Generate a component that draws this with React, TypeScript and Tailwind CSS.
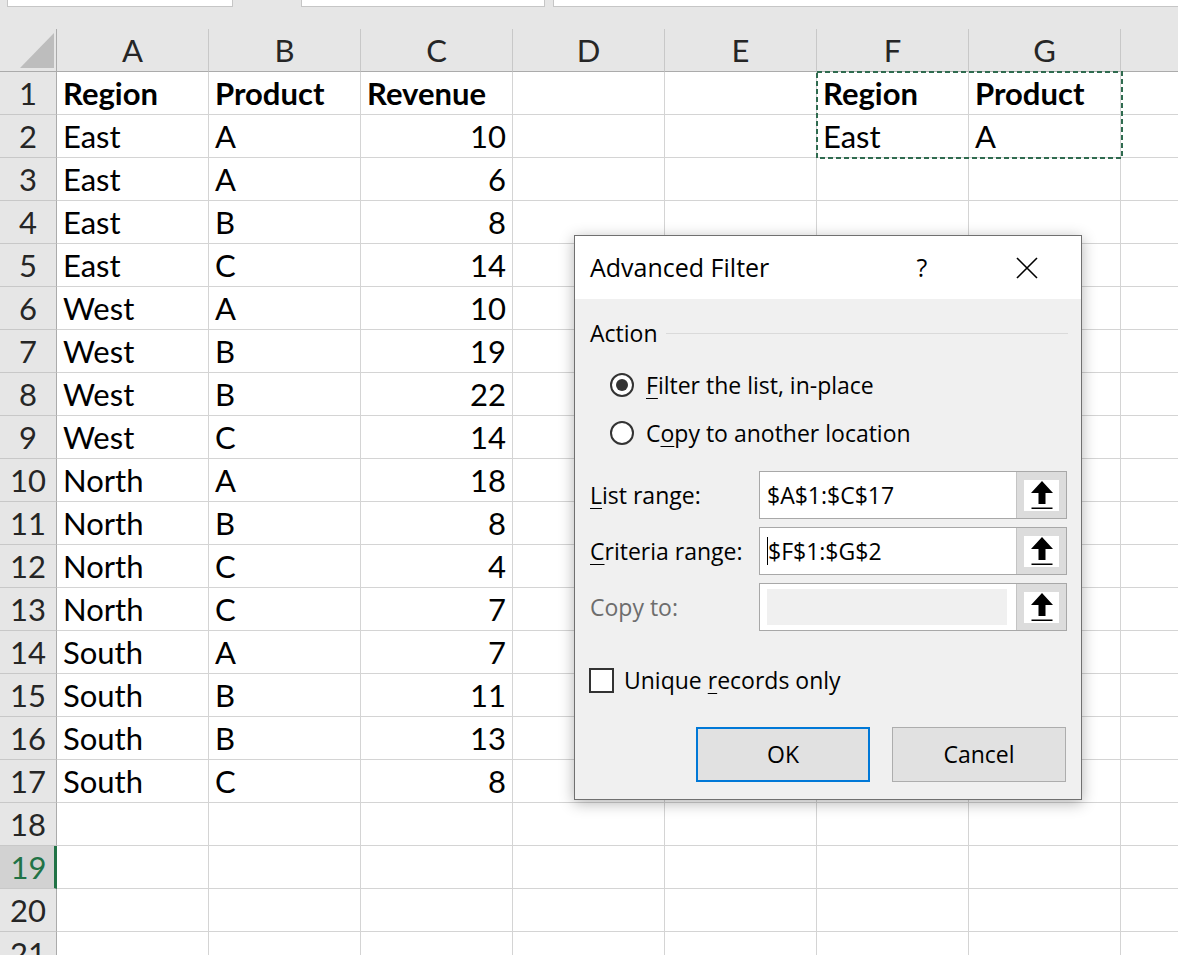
import React from 'react';

const COLS = ['A', 'B', 'C', 'D', 'E', 'F', 'G', 'H'];

type Row = Partial<Record<string, string>>;

const DATA: Row[] = [
  { A: 'Region', B: 'Product', C: 'Revenue', F: 'Region', G: 'Product' },
  { A: 'East', B: 'A', C: '10', F: 'East', G: 'A' },
  { A: 'East', B: 'A', C: '6' },
  { A: 'East', B: 'B', C: '8' },
  { A: 'East', B: 'C', C: '14' },
  { A: 'West', B: 'A', C: '10' },
  { A: 'West', B: 'B', C: '19' },
  { A: 'West', B: 'B', C: '22' },
  { A: 'West', B: 'C', C: '14' },
  { A: 'North', B: 'A', C: '18' },
  { A: 'North', B: 'B', C: '8' },
  { A: 'North', B: 'C', C: '4' },
  { A: 'North', B: 'C', C: '7' },
  { A: 'South', B: 'A', C: '7' },
  { A: 'South', B: 'B', C: '11' },
  { A: 'South', B: 'B', C: '13' },
  { A: 'South', B: 'C', C: '8' },
  {},
  {},
  {},
  {},
];

const ACTIVE_ROW = 19;

const RefArrow: React.FC = () => (
  <div className="w-[35px] h-[31px] bg-white flex items-center justify-center">
    <svg width="24" height="30" viewBox="0 0 24 30">
      <path d="M12 1 L23 13 L15.5 13 L15.5 24 L8.5 24 L8.5 13 L1 13 Z" fill="#000" />
      <rect x="1.5" y="27.5" width="21" height="1.5" fill="#000" />
    </svg>
  </div>
);

const Key: React.FC<{ children: React.ReactNode }> = ({ children }) => (
  <span className="underline decoration-1 underline-offset-[4px]">{children}</span>
);

const RangeField: React.FC<{
  label: React.ReactNode;
  value?: string;
  caret?: boolean;
  disabled?: boolean;
}> = ({ label, value, caret, disabled }) => (
  <div className="h-[48px] flex items-center">
    <div className={`w-[169px] leading-none ${disabled ? 'text-[#6d6d6d]' : 'text-black'}`}>{label}</div>
    <div className="w-[308px] h-[48px] border border-[#a8a8a8] flex bg-white">
      {disabled ? (
        <div className="flex-1 pl-[7px] pr-[9px] py-[5px]">
          <div className="w-full h-full bg-[#f0f0f0]" />
        </div>
      ) : (
        <div className="flex-1 flex items-center pl-[7px] leading-none">
          {caret && <span className="w-px h-[28px] bg-black" />}
          <span>{value}</span>
        </div>
      )}
      <div className="w-[50px] bg-[#dcdcdc] border-l border-[#c4c4c4] flex items-center justify-center">
        <RefArrow />
      </div>
    </div>
  </div>
);

const Radio: React.FC<{ checked?: boolean; children: React.ReactNode }> = ({ checked, children }) => (
  <div className="h-[48px] flex items-center pl-[20px] gap-[12px]">
    <div className="w-[24px] h-[24px] rounded-full border-2 border-[#333333] bg-white flex items-center justify-center">
      {checked && <div className="w-[12px] h-[12px] rounded-full bg-[#333333]" />}
    </div>
    <span className="leading-none">{children}</span>
  </div>
);

const AdvancedFilterDialog: React.FC = () => (
  <div className="absolute left-[574px] top-[235px] w-[508px] h-[565px] border border-[#707070] bg-[#f0f0f0] shadow-[0_3px_14px_rgba(0,0,0,0.3)] font-['Open_Sans',sans-serif] text-[23px] text-black flex flex-col">
    {/* title bar */}
    <div className="h-[63px] shrink-0 bg-white flex items-center pl-[15px] pr-[34px]">
      <span className="flex-1 text-[25px] leading-none">Advanced Filter</span>
      <span className="w-[40px] text-center text-[25px] leading-none">?</span>
      <span className="w-[40px] ml-[65px] flex items-center justify-center">
        <svg width="22" height="22" viewBox="0 0 22 22">
          <path d="M1 1 L21 21 M21 1 L1 21" stroke="#000" strokeWidth="1.6" />
        </svg>
      </span>
    </div>

    <div className="flex flex-col pl-[15px] pr-[14px] pt-[18px]">
      {/* Action group */}
      <div className="h-[32px] flex items-center">
        <span className="leading-none">Action</span>
        <div className="flex-1 h-px bg-[#dadada] ml-[8px] mr-[-1px]" />
      </div>
      <div className="mt-[12px]">
        <Radio checked>
          <Key>F</Key>ilter the list, in-place
        </Radio>
        <Radio>
          C<Key>o</Key>py to another location
        </Radio>
      </div>

      <div className="mt-[14px] flex flex-col gap-[8px]">
        <RangeField label={<><Key>L</Key>ist range:</>} value="$A$1:$C$17" />
        <RangeField label={<><Key>C</Key>riteria range:</>} value="$F$1:$G$2" caret />
        <RangeField label="Copy to:" disabled />
      </div>

      <div className="mt-[33px] h-[32px] flex items-center gap-[10px] -ml-px">
        <div className="w-[25px] h-[25px] border-2 border-[#333333] bg-white" />
        <span className="leading-none">
          Unique <Key>r</Key>ecords only
        </span>
      </div>

      <div className="mt-[31px] flex justify-end gap-[22px] pr-px">
        <button className="w-[174px] h-[55px] border-2 border-[#0078d7] bg-[#e1e1e1] leading-none">OK</button>
        <button className="w-[174px] h-[55px] border border-[#adadad] bg-[#e1e1e1] leading-none">Cancel</button>
      </div>
    </div>
  </div>
);

export default function App() {
  return (
    <div className="relative w-[1178px] h-[955px] overflow-hidden bg-white font-['Lato',sans-serif] text-[31px] text-black">
      {/* formula bar remnants */}
      <div className="h-[29px] bg-[#e6e6e6] flex items-start">
        <div className="ml-[7px] w-[226px] h-[7px] bg-white border-x border-b border-[#c6c6c6]" />
        <div className="ml-[68px] w-[244px] h-[7px] bg-white border-x border-b border-[#c6c6c6]" />
        <div className="ml-[8px] flex-1 h-[7px] bg-white border-l border-b border-[#c6c6c6]" />
      </div>

      {/* sheet grid */}
      <div className="grid grid-cols-[57px_repeat(8,152px)] auto-rows-[43px] leading-[42px]">
        <div className="bg-[#e6e6e6] border-r border-b border-[#ababab] flex items-end justify-start">
          <svg width="56" height="42" viewBox="0 0 56 42">
            <polygon points="54,4 54,39 20,39" fill="#bdbdbd" />
          </svg>
        </div>
        {COLS.map((c) => (
          <div key={c} className="bg-[#e6e6e6] border-r border-r-[#c8c8c8] border-b border-b-[#ababab] text-center text-[#262626]">
            {c}
          </div>
        ))}

        {DATA.map((row, i) => {
          const n = i + 1;
          const active = n === ACTIVE_ROW;
          return (
            <React.Fragment key={n}>
              <div
                className={
                  active
                    ? 'bg-[#d2d2d2] border-r-[3px] border-r-[#217346] border-b border-b-[#c8c8c8] text-center text-[#217346] pl-[3px]'
                    : 'bg-[#e6e6e6] border-r border-r-[#ababab] border-b border-b-[#c8c8c8] text-center text-[#262626]'
                }
              >
                {n}
              </div>
              {COLS.map((c) => {
                const v = row[c];
                const numeric = v !== undefined && /^\d+$/.test(v);
                return (
                  <div
                    key={c}
                    className={`border-r border-b border-[#d4d4d4] whitespace-nowrap overflow-hidden ${
                      numeric ? 'text-right pr-[6px]' : 'pl-[6px]'
                    } ${n === 1 ? 'font-bold' : ''}`}
                  >
                    {v}
                  </div>
                );
              })}
            </React.Fragment>
          );
        })}
      </div>

      {/* copy marquee around criteria range F1:G2 */}
      <svg className="absolute left-[816px] top-[71px]" width="307" height="88" viewBox="0 0 307 88">
        <rect x="1" y="1" width="305" height="86" fill="none" stroke="#2f6b4f" strokeWidth="2" strokeDasharray="5 3" />
      </svg>

      <AdvancedFilterDialog />
    </div>
  );
}
